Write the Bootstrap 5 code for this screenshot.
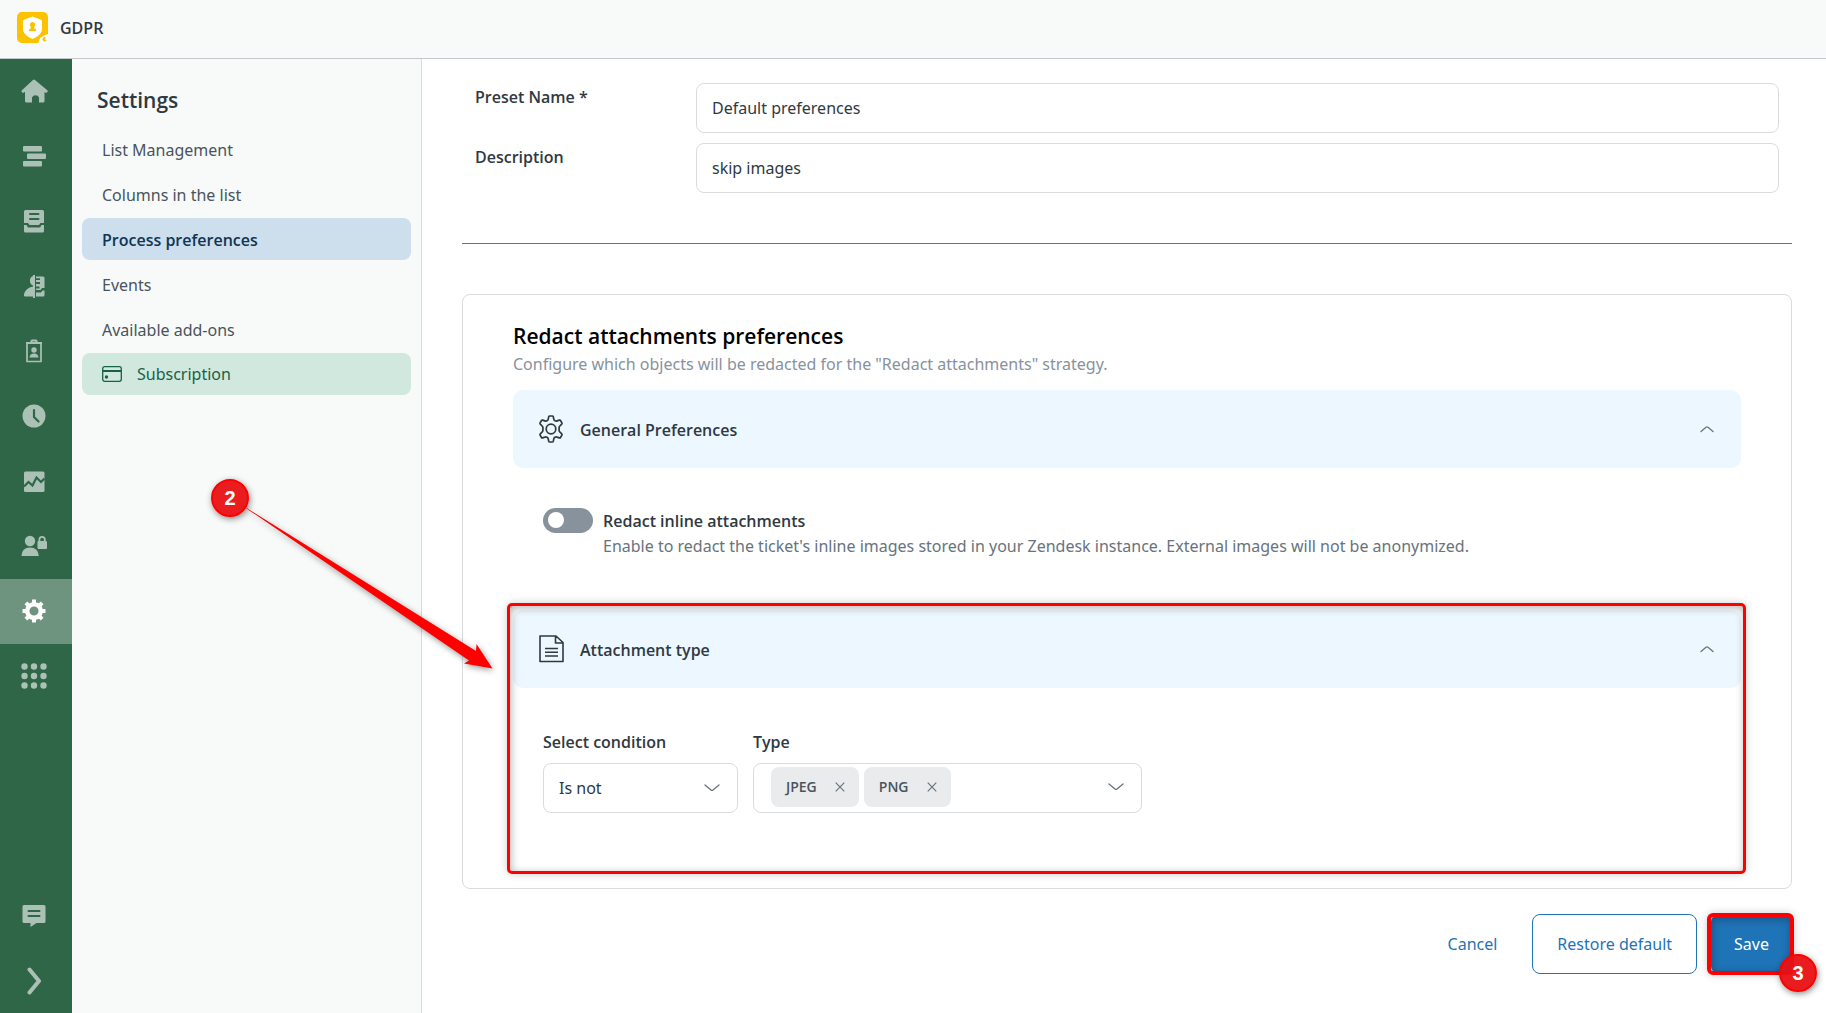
<!DOCTYPE html>
<html lang="en">
<head>
<meta charset="utf-8">
<meta name="viewport" content="width=device-width, initial-scale=1">
<title>GDPR - Process preferences</title>
<link href="https://cdn.jsdelivr.net/npm/bootstrap@5.3.0/dist/css/bootstrap.min.css" rel="stylesheet">
<style>
:root { --ink: #2f3941; --line: #d8dcde; --blue: #1f73b7; --callout: #ff0000; --strong-font: "Open Sans", "Noto Sans", sans-serif; }
body { font-family: "Noto Sans", "Open Sans", sans-serif; font-size: 16px; line-height: 24px; color: var(--ink); background: #fff; }
.topbar { height: 59px; padding: 0 16px 2px; background: #f8faf9; border-bottom: 1px solid #c2c8cc; font-family: var(--strong-font); }
.app-rail { width: 72px; background: #2f6647; flex: none; }
.rail-link { height: 65px; padding: 0 4px 2px 0; color: #acc1b5; }
.rail-link.active { background: #6e937f; color: #fff; }
.settings-nav { width: 350px; flex: none; background: #f8faf9; border-right: 1px solid var(--line); padding: 25px 10px; }
.settings-title { font-family: var(--strong-font); font-size: 21px; line-height: 32px; font-weight: 600; padding-left: 15px; margin-bottom: 12px; }
.settings-nav .nav { gap: 3px; }
.settings-nav .nav-link { height: 42px; line-height: 26px; padding: 9px 20px 7px; border-radius: 8px; color: #49545c; }
.settings-nav .nav-link.active { background: #cddeed; color: #0f3554; font-family: var(--strong-font); font-weight: 600; }
.settings-nav .nav-link.plan { background: #d1e8df; color: #186146; gap: 15px; padding: 8px 20px; }
.page-main { padding: 24px 34px 24px 40px; }
.preset-form { padding: 0 13px; gap: 10px; }
.preset-form .field-name { width: 221px; flex: none; line-height: 28px; font-weight: 600; font-family: var(--strong-font); }
.field { height: 50px; border-radius: 8px; border-color: var(--line); color: var(--ink); font-size: 16px; padding: 0 15px; }
.rule { border-top: 1px solid #68737d; margin: 50px 0; opacity: 1; }
.panel { border: 1px solid var(--line); border-radius: 8px; padding: 27px 50px 22px; }
.panel-title { font-family: var(--strong-font); font-size: 21px; line-height: 28px; font-weight: 600; color: #000; margin: 0; }
.panel-note { color: #87929d; line-height: 28px; margin: 0 0 12px; }
.section-head { height: 78px; border: 0; border-radius: 10px; background: #edf7ff; color: var(--ink); font-family: var(--strong-font); font-weight: 600; padding: 0 24px; gap: 15px; }
.section-head span { padding-top: 2px; }
.section-head svg:last-child { color: #68737d; }
.inline-option { padding: 40px 30px 52px; gap: 10px; }
.form-check-input.toggle { width: 50px; height: 25px; margin: 0; flex: none; border: 0; background-color: #87929d; background-size: 25px 25px; background-position: left center; background-repeat: no-repeat;
  background-image: url("data:image/svg+xml,%3csvg xmlns='http://www.w3.org/2000/svg' viewBox='0 0 25 25'%3e%3ccircle cx='13' cy='12' r='8' fill='%23fff'/%3e%3c/svg%3e"); }
.form-check-input.toggle:checked { background-color: var(--blue); background-position: right center; }
.inline-option label { font-weight: 600; display: block; line-height: 26px; font-family: var(--strong-font); }
.inline-option p { color: #68737d; margin: 0; }
.callout-box { position: absolute; inset: -7px -5px -8px -6px; border: 3px solid var(--callout); border-radius: 5px; box-shadow: 0 0 8px rgba(0,0,0,.2), inset 1px 2px 8px rgba(0,0,0,.3); pointer-events: none; }
.criteria { padding: 40px 30px 53px; gap: 15px; }
.criteria label, .criteria .group-name { display: block; font-weight: 600; font-family: var(--strong-font); line-height: 28px; margin-bottom: 7px; }
.condition { width: 195px; background-size: 16px 16px; background-position: right 17px center;
  --bs-form-select-bg-img: url("data:image/svg+xml,%3csvg xmlns='http://www.w3.org/2000/svg' viewBox='0 0 16 16' fill='none' stroke='%2368737d' stroke-width='1.3' stroke-linecap='round'%3e%3cpath d='M1 5l6 5q1 .8 2 0l6-5'/%3e%3c/svg%3e"); }
.type-box { width: 389px; height: 50px; border: 1px solid var(--line); border-radius: 8px; padding: 0 17px 2px; gap: 5px; }
.chip { height: 40px; border-radius: 8px; background: #e9ebed; color: #49545c; font-family: var(--strong-font); font-size: 14px; font-weight: 600; padding: 0 14px 0 15px; gap: 18px; }
.bare { border: 0; background: none; padding: 0; color: #68737d; line-height: 0; }
.actions { padding-top: 25px; gap: 14px; }
.actions .btn { height: 60px; border-radius: 8px; font-size: 16px; --bs-btn-color: var(--blue); --bs-btn-border-color: var(--blue); padding: 0 24px; }
.actions .btn-cancel { --bs-btn-border-color: transparent; margin-right: 10px; padding: 0 10px; }
.actions .btn-save { background: var(--blue); color: #fff; padding: 0 22px; }
.actions .callout-box { inset: -1px -2px -1px -4px; border-width: 4px; border-radius: 6px; }
.step-dot { position: absolute; width: 38px; height: 38px; border: 2px solid var(--callout); border-radius: 50%; background: rgba(232,17,20,.95); color: #fff; font: 600 20px/34px "Liberation Sans", sans-serif; text-align: center; box-shadow: 1px 2px 6px rgba(0,0,0,.45); }
.step-save { right: -25px; bottom: -18px; }
.step-type { left: 211px; top: 479px; }
.callout-arrow { position: absolute; left: 230px; top: 490px; filter: drop-shadow(1px 2px 3px rgba(0,0,0,.4)); pointer-events: none; }
</style>
</head>
<body>
<div class="d-flex flex-column min-vh-100 position-relative overflow-hidden">
  <header class="topbar d-flex align-items-center">
    <svg class="me-2" width="32" height="32" viewBox="0 0 32 32" aria-hidden="true">
      <rect x="1" y="0" width="31" height="31" rx="5" fill="#fcc200"/>
      <path d="M16.500 5l9 3.500v8.500q0 6-9 9.500Q7.500 23 7.500 17V8.500z" fill="#fff" stroke="#fff" stroke-linejoin="round"/>
      <circle cx="16.500" cy="12.500" r="2.600" fill="#fcc200"/><path d="M15 14h3l.6 3h1.400v2h-7v-2h1.400z" fill="#fcc200"/>
      <path d="M22 32q1-8 10-10v10z" fill="#fff"/><path d="M30 25.500a2.200 2.200 0 1 0 .5 3l-1.800-1z" fill="#fcc200"/>
    </svg>
    <span class="ms-1 fw-semibold">GDPR</span>
  </header>

  <div class="d-flex flex-grow-1">
    <nav class="app-rail d-flex flex-column" aria-label="Apps">
      <a class="rail-link d-flex align-items-center justify-content-center" href="#" aria-label="Home"><svg width="28" height="26" viewBox="0 0 28 26" fill="currentColor"><path d="M13 2q1-.8 2 0l12.300 10.300q.9 1-.1 1.900-1 .8-2 .2l-.7-.5V23q0 1.500-1.500 1.500h-4V19.500a3.800 3.800 0 0 0-7 0v5H6.500Q5 24.500 5 23v-9.200l-1 .7q-1.200.7-2-.2-1-1-.1-2z"/></svg></a>
      <a class="rail-link d-flex align-items-center justify-content-center" href="#" aria-label="Views"><svg width="26" height="26" viewBox="0 0 26 26" fill="currentColor"><rect x="2" y="3" width="19" height="5.500" rx="1"/><rect x="6" y="10.500" width="19" height="5.500" rx="1"/><rect x="2" y="18" width="19" height="5.500" rx="1"/></svg></a>
      <a class="rail-link d-flex align-items-center justify-content-center" href="#" aria-label="Tickets"><svg width="26" height="26" viewBox="0 0 26 26" fill="currentColor"><path fill-rule="evenodd" d="M4.500 2h17q1.500 0 1.500 1.500V15h-3.500l-1.500 2H8.500L7 15H3V3.500Q3 2 4.500 2zM9 5q-1 0-1 1t1 1h8.500q1 0 1-1t-1-1zm0 5q-1 0-1 1t1 1h8.500q1 0 1-1t-1-1zM3 17h2.500L7 19.500h12l1.500-2.500H23v6q0 1.500-1.500 1.500h-17Q3 24.500 3 23z"/></svg></a>
      <a class="rail-link d-flex align-items-center justify-content-center" href="#" aria-label="Contacts"><svg width="26" height="26" viewBox="0 0 26 26" fill="currentColor"><path d="M12 3v9.500a5.200 5.200 0 0 1 0-9.500zM12 13.500v10H4q-1.500 0-1-2 1.500-6.500 9-8zM12 2h2v23h-2z"/><path fill-rule="evenodd" d="M15 3.500h7q1.500 0 1.500 1.500v10H21l-1.500 2H15v-1.500h3.500v-2H15V11h4V9h-4V7h4V5.200h-4zM15 19.500h5l1.500-2h2V22q0 1.500-1.500 1.500h-7z"/></svg></a>
      <a class="rail-link d-flex align-items-center justify-content-center" href="#" aria-label="Badges"><svg width="26" height="26" viewBox="0 0 26 26" fill="none" stroke="currentColor"><path d="M6 6v17.500h14V6" stroke-width="1.700" stroke-linejoin="round"/><path d="M5 5h16" stroke-width="2"/><path d="M10.500 5V3q0-.5.500-.5h4q.5 0 .5.500v2" stroke-width="2"/><circle cx="13" cy="12" r="2.700" fill="currentColor" stroke="none"/><path d="M8.500 19.500q.5-4 4.500-4t4.500 4z" fill="currentColor" stroke="none"/></svg></a>
      <a class="rail-link d-flex align-items-center justify-content-center" href="#" aria-label="History"><svg width="26" height="26" viewBox="0 0 26 26"><circle cx="13" cy="13" r="11.500" fill="currentColor"/><path d="M13 7v7l4.500 4.500" fill="none" stroke="#2f6647" stroke-width="2.200" stroke-linecap="round"/></svg></a>
      <a class="rail-link d-flex align-items-center justify-content-center" href="#" aria-label="Reports"><svg width="26" height="26" viewBox="0 0 26 26"><rect x="3" y="3.500" width="20.500" height="20.500" rx="1.500" fill="currentColor"/><path d="M3 18.500l4.500-4.500 4 3.500 4-8 4.500 4.500 3.500-3.500" fill="none" stroke="#2f6647" stroke-width="2.200"/></svg></a>
      <a class="rail-link d-flex align-items-center justify-content-center" href="#" aria-label="Privacy"><svg width="26" height="26" viewBox="0 0 26 26" fill="currentColor"><circle cx="9" cy="8" r="5.200"/><path d="M.5 23q.2-8.500 8.500-8.500t8.800 8.500z"/><path fill-rule="evenodd" d="M17.500 8V6.500a3.600 3.600 0 0 1 7.200 0V8q1.300 0 1.300 1v6q0 1-1 1h-7.500q-1 0-1-1V9q0-1 1-1zm1.800 0h3.600V6.500a1.800 1.800 0 0 0-3.600 0z"/></svg></a>
      <a class="rail-link active d-flex align-items-center justify-content-center" href="#" aria-label="Settings"><svg width="26" height="26" viewBox="0 0 26 26" fill="none" stroke="currentColor"><circle cx="13" cy="13" r="6.800" stroke-width="4.500"/><path d="M13 1.500V6M13 20v4.500M1.500 13H6M20 13h4.500M4.900 4.900L8 8M18 18l3.100 3.100M4.900 21.100L8 18M18 8l3.100-3.100" stroke-width="4"/></svg></a>
      <a class="rail-link d-flex align-items-center justify-content-center" href="#" aria-label="All apps"><svg width="26" height="26" viewBox="0 0 26 26" fill="currentColor"><circle cx="3.500" cy="3.500" r="3.200"/><circle cx="13" cy="3.500" r="3.200"/><circle cx="22.500" cy="3.500" r="3.200"/><circle cx="3.500" cy="13" r="3.200"/><circle cx="13" cy="13" r="3.200"/><circle cx="22.500" cy="13" r="3.200"/><circle cx="3.500" cy="22.500" r="3.200"/><circle cx="13" cy="22.500" r="3.200"/><circle cx="22.500" cy="22.500" r="3.200"/></svg></a>
      <a class="rail-link mt-auto d-flex align-items-center justify-content-center" href="#" aria-label="Messages"><svg width="26" height="26" viewBox="0 0 26 26" fill="currentColor"><path fill-rule="evenodd" d="M3 3h20q1.500 0 1.500 1.500V19.500q0 1.500-1.500 1.500h-7.500L9.500 25v-4H3Q1.500 21 1.500 19.500V4.500Q1.500 3 3 3zM7.500 8q-1 0-1 1t1 1h11q1 0 1-1t-1-1zm0 5q-1 0-1 1t1 1h11q1 0 1-1t-1-1z"/></svg></a>
      <a class="rail-link d-flex align-items-center justify-content-center" href="#" aria-label="Expand"><svg width="26" height="30" viewBox="0 0 26 30" fill="none" stroke="currentColor" stroke-width="4" stroke-linecap="round" stroke-linejoin="round"><path d="M8.500 4.500L18 16 8.500 27.500"/></svg></a>
    </nav>

    <aside class="settings-nav">
      <h1 class="settings-title">Settings</h1>
      <nav class="nav flex-column" aria-label="Settings">
        <a class="nav-link" href="#">List Management</a>
        <a class="nav-link" href="#">Columns in the list</a>
        <a class="nav-link active" aria-current="page" href="#">Process preferences</a>
        <a class="nav-link" href="#">Events</a>
        <a class="nav-link" href="#">Available add-ons</a>
        <a class="nav-link plan d-flex align-items-center" href="#">
          <svg width="20" height="16" viewBox="0 0 20 16" fill="none" stroke="currentColor" stroke-width="1.300"><rect x=".7" y=".7" width="18.600" height="14.600" rx="2"/><path d="M1 5h18" stroke-width="2"/><circle cx="4.500" cy="11" r="1.700" fill="currentColor" stroke="none"/></svg>
          Subscription
        </a>
      </nav>
    </aside>

    <main class="page-main flex-grow-1">
      <form>
        <div class="preset-form d-flex flex-column">
          <div class="d-flex"><label class="field-name" for="preset">Preset Name *</label><input class="form-control field" id="preset" type="text" value="Default preferences"></div>
          <div class="d-flex"><label class="field-name" for="descr">Description</label><input class="form-control field" id="descr" type="text" value="skip images"></div>
        </div>
        <hr class="rule">
        <section class="panel">
          <h2 class="panel-title">Redact attachments preferences</h2>
          <p class="panel-note">Configure which objects will be redacted for the "Redact attachments" strategy.</p>

          <button class="section-head d-flex align-items-center w-100" type="button" aria-expanded="true">
            <svg width="28" height="28" viewBox="0 0 28 28" fill="none" stroke="currentColor" stroke-width="1.700" stroke-linejoin="round"><circle cx="14" cy="14" r="4.800"/><path d="M11.200 4.200 11.700 1.800q.2-.8 1-.8h2.600q.8 0 1 .8l.5 2.400q.3 1 1.200 1.500 1.100.6 2.100.2l2.200-.8q.8-.3 1.200.4l1.400 2.400q.4.700-.2 1.300l-1.700 1.600q-.9.700-.9 1.900v2.600q0 1.200.9 1.900l1.700 1.600q.6.600.2 1.300l-1.400 2.400q-.4.700-1.200.4l-2.200-.8q-1-.4-2.100.2-.9.500-1.200 1.500l-.5 2.400q-.2.800-1 .8h-2.600q-.8 0-1-.8l-.5-2.400q-.3-1-1.200-1.500-1.100-.6-2.100-.2l-2.200.8q-.8.300-1.200-.4l-1.400-2.400q-.4-.7.200-1.300L5 17.200q.9-.7.900-1.900v-2.600q0-1.200-.9-1.900L3.300 9.200q-.6-.6-.2-1.300l1.400-2.400q.4-.7 1.200-.4l2.200.8q1 .4 2.100-.2.900-.5 1.200-1.500z"/></svg>
            <span>General Preferences</span>
            <svg class="ms-auto" width="20" height="16" viewBox="0 0 20 16" fill="none" stroke="currentColor" stroke-width="1.300" stroke-linecap="round"><path d="M4 10.500l5-4.200q1-.8 2 0L16 10.500"/></svg>
          </button>
          <div class="inline-option d-flex">
            <input class="form-check-input toggle rounded-pill" type="checkbox" role="switch" id="inline" aria-describedby="inline-note">
            <div><label for="inline">Redact inline attachments</label><p id="inline-note">Enable to redact the ticket's inline images stored in your Zendesk instance. External images will not be anonymized.</p></div>
          </div>

          <div class="position-relative">
            <button class="section-head d-flex align-items-center w-100" type="button" aria-expanded="true">
              <svg width="28" height="28" viewBox="0 0 28 28" fill="none" stroke="currentColor" stroke-width="1.600" stroke-linejoin="round"><path d="M3 1h16l7 6.500V26.500H3zM18.500 1v7H26M8 13.500h13M8 17.200h13M8 21h13"/></svg>
              <span>Attachment type</span>
              <svg class="ms-auto" width="20" height="16" viewBox="0 0 20 16" fill="none" stroke="currentColor" stroke-width="1.300" stroke-linecap="round"><path d="M4 10.500l5-4.200q1-.8 2 0L16 10.500"/></svg>
            </button>
            <div class="criteria d-flex">
              <div><label for="condition">Select condition</label>
                <select class="form-select field condition" id="condition"><option>Is not</option><option>Is</option></select></div>
              <div role="group" aria-labelledby="type-name"><span class="group-name" id="type-name">Type</span>
                <div class="type-box d-flex align-items-center">
                  <span class="chip d-flex align-items-center">JPEG <button class="bare" type="button" aria-label="Remove JPEG"><svg width="10" height="10" viewBox="0 0 10 10" stroke="currentColor" stroke-width="1.200"><path d="M.7.7l8.600 8.600M9.300.7L.7 9.300"/></svg></button></span>
                  <span class="chip d-flex align-items-center">PNG <button class="bare" type="button" aria-label="Remove PNG"><svg width="10" height="10" viewBox="0 0 10 10" stroke="currentColor" stroke-width="1.200"><path d="M.7.7l8.600 8.600M9.300.7L.7 9.300"/></svg></button></span>
                  <button class="bare ms-auto" type="button" aria-label="Show types"><svg width="16" height="16" viewBox="0 0 16 16" fill="none" stroke="currentColor" stroke-width="1.300" stroke-linecap="round"><path d="M1 5l6 5q1 .8 2 0l6-5"/></svg></button>
                </div></div>
            </div>
            <span class="callout-box"></span>
          </div>
        </section>
        <div class="actions d-flex justify-content-end">
          <button class="btn btn-cancel" type="button">Cancel</button>
          <button class="btn" type="button">Restore default</button>
          <div class="position-relative">
            <button class="btn btn-save" type="submit">Save</button>
            <span class="callout-box"></span>
            <span class="step-dot step-save">3</span>
          </div>
        </div>
      </form>
    </main>
  </div>
  <span class="step-dot step-type">2</span>
  <svg class="callout-arrow" width="270" height="190" viewBox="0 0 270 190" aria-hidden="true"><path d="M7 12L246 161l.5-7L262.500 178.500 234 173.500l5-3z" fill="#f00"/></svg>
</div>
<script src="https://cdn.jsdelivr.net/npm/bootstrap@5.3.0/dist/js/bootstrap.bundle.min.js"></script>
</body>
</html>
